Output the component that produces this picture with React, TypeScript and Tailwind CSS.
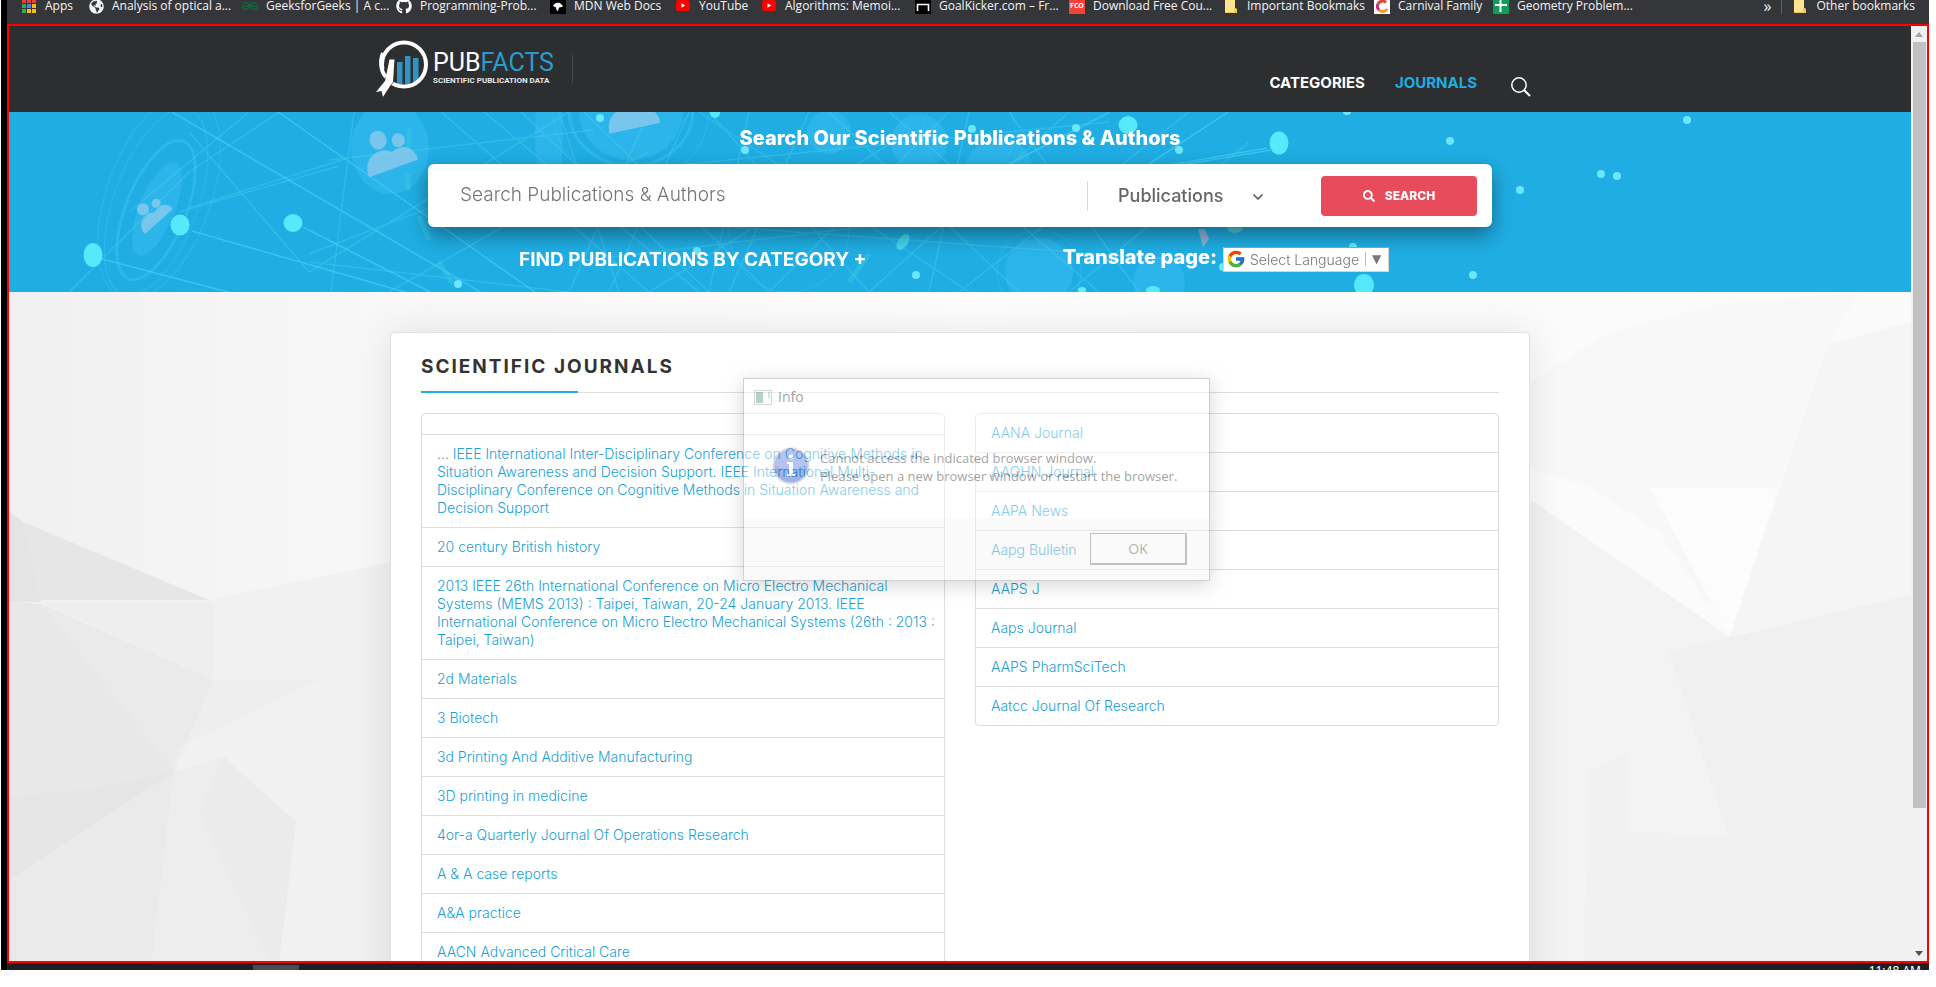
import React from "react";
import { FaGithub, FaSearch, FaGlobeAmericas } from "react-icons/fa";
import { FcGoogle } from "react-icons/fc";
import { SiGeeksforgeeks } from "react-icons/si";
import { ChevronDown } from "lucide-react";

const leftJournals = [
  "",
  "... IEEE International Inter-Disciplinary Conference on Cognitive Methods in\nSituation Awareness and Decision Support. IEEE International Multi-\nDisciplinary Conference on Cognitive Methods in Situation Awareness and\nDecision Support",
  "20 century British history",
  "2013 IEEE 26th International Conference on Micro Electro Mechanical\nSystems (MEMS 2013) : Taipei, Taiwan, 20-24 January 2013. IEEE\nInternational Conference on Micro Electro Mechanical Systems (26th : 2013 :\nTaipei, Taiwan)",
  "2d Materials",
  "3 Biotech",
  "3d Printing And Additive Manufacturing",
  "3D printing in medicine",
  "4or-a Quarterly Journal Of Operations Research",
  "A & A case reports",
  "A&A practice",
  "AACN Advanced Critical Care",
];

const rightJournals = [
  "AANA Journal",
  "AAOHN Journal",
  "AAPA News",
  "Aapg Bulletin",
  "AAPS J",
  "Aaps Journal",
  "AAPS PharmSciTech",
  "Aatcc Journal Of Research",
];

function AppsIcon() {
  const colors = ["#ea4335", "#ea4335", "#ea4335", "#34a853", "#4285f4", "#fbbc05", "#34a853", "#fbbc05", "#fbbc05"];
  return (
    <svg viewBox="0 0 16 16" className="size-4">
      {colors.map((c, i) => (
        <rect key={i} x={1 + (i % 3) * 5} y={1 + Math.floor(i / 3) * 5} width="4" height="4" fill={c} />
      ))}
    </svg>
  );
}

function FolderIcon() {
  return (
    <svg viewBox="0 0 16 16" className="size-4">
      <path d="M2 0h10v10l2 1v4H2z" fill="#ffe38f" />
      <path d="M2 14h9v1H2zM11 10l3 1v4h-3z" fill="#f2c94c" />
    </svg>
  );
}

function MdnIcon() {
  return (
    <svg viewBox="0 0 16 16" className="size-4">
      <rect width="16" height="16" fill="#000" />
      <path d="M3 8c1-3 4-4 7-3l3 3-1 1-3 .5L8 13 6.500 12 6 9.500z" fill="#fff" />
    </svg>
  );
}

function GoalIcon() {
  return (
    <svg viewBox="0 0 16 16" className="size-4">
      <rect width="16" height="16" fill="#000" />
      <path d="M2.500 13V6.500h11V13" fill="none" stroke="#fff" strokeWidth="1.600" />
    </svg>
  );
}

function CarnivalIcon() {
  return (
    <svg viewBox="0 0 16 16" className="size-4">
      <rect width="16" height="16" fill="#fff" />
      <path d="M12 4.500A5 5 0 0 0 4 6" fill="none" stroke="#e6452e" strokeWidth="3" />
      <path d="M4 6a5 5 0 0 0 1 6" fill="none" stroke="#c2308a" strokeWidth="3" />
      <path d="M5 12a5 5 0 0 0 8-1" fill="none" stroke="#f59a23" strokeWidth="3" />
    </svg>
  );
}

function SheetIcon() {
  return (
    <svg viewBox="0 0 16 16" className="size-4">
      <rect width="16" height="16" rx="1" fill="#0f9d58" />
      <path d="M7.500 2v12M2 7h12" stroke="#fff" strokeWidth="2" />
    </svg>
  );
}

function YouTubeIcon() {
  return (
    <svg viewBox="0 0 16 16" className="size-4">
      <rect x="1" y="2" width="14" height="11" rx="2.500" fill="#f00" />
      <path d="M6.500 5.200v4.600L10.300 7.500z" fill="#fff" />
    </svg>
  );
}

const bookmarks = [
  { label: "Apps", icon: <AppsIcon />, width: "w-[67px]" },
  { label: "Analysis of optical a...", icon: <FaGlobeAmericas className="size-[15px] text-gray-100" />, width: "w-[154px]" },
  { label: "GeeksforGeeks | A c...", icon: <SiGeeksforgeeks className="size-4 text-[#0f6b3c]" />, width: "w-[154px]" },
  { label: "Programming-Prob...", icon: <FaGithub className="size-4 text-white" />, width: "w-[154px]" },
  { label: "MDN Web Docs", icon: <MdnIcon />, width: "w-[125px]" },
  { label: "YouTube", icon: <YouTubeIcon />, width: "w-[86px]" },
  { label: "Algorithms: Memoi...", icon: <YouTubeIcon />, width: "w-[154px]" },
  { label: "GoalKicker.com – Fr...", icon: <GoalIcon />, width: "w-[154px]" },
  {
    label: "Download Free Cou...",
    icon: <span className="flex size-4 items-center justify-center bg-[#f44336] text-[7px] font-bold text-white">FCO</span>,
    width: "w-[154px]",
  },
  { label: "Important Bookmaks", icon: <FolderIcon />, width: "w-[151px]" },
  { label: "Carnival Family", icon: <CarnivalIcon />, width: "w-[119px]" },
  { label: "Geometry Problem...", icon: <SheetIcon />, width: "w-[154px]" },
];

function BookmarksBar() {
  return (
    <nav aria-label="Bookmarks" className="flex h-6 shrink-0 flex-col justify-end overflow-hidden bg-[#35363a]">
      <div className="flex h-9 shrink-0 items-center pr-3.5 pl-[14px] font-['Open_Sans',sans-serif] text-[12px] leading-4 text-gray-100">
        {bookmarks.map((b, i) => (
          <a key={i} href="#" className={`flex shrink-0 items-center gap-2 whitespace-nowrap ${b.width}`}>
            <span className="flex size-4 shrink-0 items-center justify-center">{b.icon}</span>
            {b.label}
          </a>
        ))}
        <div className="ml-auto flex items-center">
          <button type="button" aria-label="More bookmarks" className="pr-2.5 text-[16px]">
            »
          </button>
          <span className="h-4 w-px bg-[#5f6368]" />
          <a href="#" className="flex items-center gap-2 pl-2.5 whitespace-nowrap">
            <FolderIcon />
            Other bookmarks
          </a>
        </div>
      </div>
    </nav>
  );
}

function Logo() {
  return (
    <a href="#" aria-label="PubFacts" className="flex items-center">
      <svg viewBox="0 0 54 60" className="h-[60px] w-[54px]">
        <rect x="22" y="23" width="5.500" height="22" fill="#2f93c4" />
        <rect x="30" y="17" width="5.500" height="28" fill="#2f93c4" />
        <rect x="38" y="19" width="5.500" height="25" fill="#2f93c4" />
        <ellipse cx="29" cy="25.500" rx="22" ry="22" fill="none" stroke="#fff" strokeWidth="4" />
        <path d="M4 38 16 20l4 1-1 22-7 7-4 8-1.500-6L1 52l7-8 1-2z" fill="#2d2e30" />
        <path d="M14.500 20.500h5L18 43l-3 4-7 11-1.500-6L1 53l9-11z" fill="#fff" />
        <path d="M8 14C4 24 7 34 11 38" fill="none" stroke="#fff" strokeWidth="4" />
      </svg>
      <span className="flex flex-col pb-1 pl-1">
        <span className="font-['Roboto',sans-serif] text-[25px] leading-7 text-white">
          PUB<span className="text-[#2a9ccc]">FACTS</span>
        </span>
        <span className="font-['Roboto',sans-serif] text-[8px] leading-2 font-bold whitespace-nowrap text-gray-200">
          SCIENTIFIC PUBLICATION DATA
        </span>
      </span>
      <span className="ml-[18px] h-7 w-px bg-[#47484a]" />
    </a>
  );
}

function SiteHeader() {
  return (
    <header className="h-[86px] shrink-0 bg-[#2d2e30]">
      <div className="mx-auto flex h-full max-w-[1170px] items-center justify-between">
        <Logo />
        <div className="flex items-center pt-8 pr-3.5 text-[15px] leading-5 font-bold">
          <a href="#" className="pb-1 text-white">CATEGORIES</a>
          <a href="#" className="pb-1 pl-[30px] text-[#1fade3]">JOURNALS</a>
          <button type="button" aria-label="Search" className="ml-[34px]">
            <svg viewBox="0 0 20 20" className="mt-1 size-5" fill="none" stroke="#fff" strokeWidth="1.500">
              <circle cx="8" cy="8" r="7.200" />
              <path d="m13 13 6 6" strokeWidth="2.200" />
            </svg>
          </button>
        </div>
      </div>
    </header>
  );
}

type Dot = [number, number, number, number];

const brightDots: Dot[] = [
  [84, 143, 9.5, 12], [171, 113, 9.5, 10.5], [284, 111, 9.5, 9], [1119, 13, 9.5, 9], [1270, 31, 9.5, 11.5],
  [1355, 173, 10, 11], [706, 1, 5, 5], [1144, 178, 7, 4],
];
const smallDots: Dot[] = [
  [449, 172, 4, 4], [591, 6, 4, 4], [736, 38, 4, 4], [688, 139, 4, 4], [907, 163, 4, 4], [963, 17, 4, 4], [1067, 16, 4, 4],
  [1170, 38, 4, 4], [1073, 178, 4, 3], [1338, 0, 4, 3], [1678, 8, 4, 4], [1441, 29, 4, 4], [1592, 62, 4, 4],
  [1608, 64, 4, 4], [1511, 78, 4, 4], [1344, 135, 4, 4], [1464, 163, 4, 4], [1214, 155, 4, 4],
];
const strongLines = [
  "M163 0 424 152 500 197", "M269 0 526 180", "M93 147 219 180", "M183 119 396 180", "M294 115 421 180",
  "M1121 60 1258 36", "M1178 52 1262 38", "M1101 0 1000 52", "M1355 178 1180 230", "M1140 52 1219 0",
];
const faintLines = [
  "M180 96 345 44", "M170 100 330 54", "M320 48 585 18", "M345 0 322 180", "M180 20 300 160 560 0",
  "M300 142 420 96 560 60", "M300 150 560 180", "M432 0 640 180", "M475 0 690 180", "M512 0 700 180",
  "M550 0 610 180", "M575 0 760 180", "M60 180 180 60 300 -20", "M640 0 560 180", "M680 0 600 180", "M700 0 860 180",
  "M720 180 800 0", "M760 180 940 0", "M640 180 900 20", "M690 0 960 180", "M820 0 1010 180", "M860 180 1060 0",
  "M880 0 1090 180", "M950 180 1180 0", "M1000 0 1130 180", "M920 180 960 0", "M1060 180 1240 30", "M600 60 1100 10",
  "M380 180 520 100 640 40", "M560 150 980 100", "M650 110 1200 150", "M120 100 240 0", "M740 0 700 180",
];

function Person({ transform }: { transform: string }) {
  return (
    <g transform={transform} fill="#8ccbec" opacity="0.8">
      <ellipse cx="-3" cy="-18" rx="8.500" ry="9.500" />
      <ellipse cx="16" cy="-11" rx="6.500" ry="7" />
      <path d="M-24 14c0-14 8-21 18-21 6 0 9 2 12 5 11-4 20 0 22 12v4z" />
    </g>
  );
}

function HeroArt() {
  return (
    <svg
      aria-hidden="true"
      viewBox="0 0 1902 180"
      preserveAspectRatio="xMidYMid slice"
      className="absolute inset-0 h-full w-full"
      fill="none"
    >
      <g fill="#3fc0f5" opacity="0.4">
        <ellipse cx="381" cy="36" rx="39" ry="46" />
        <ellipse cx="622" cy="0" rx="52" ry="48" />
        <ellipse cx="148" cy="97" rx="18" ry="50" transform="rotate(22 148 97)" />
        <circle cx="820" cy="20" r="22" />
        <circle cx="910" cy="30" r="28" />
        <circle cx="990" cy="60" r="34" />
        <circle cx="1030" cy="160" r="34" />
        <circle cx="1150" cy="170" r="26" />
        <ellipse cx="540" cy="20" rx="14" ry="60" />
      </g>
      <g stroke="#48c6f3" opacity="0.4">
        <ellipse cx="147" cy="98" rx="30" ry="74" transform="rotate(22 147 98)" strokeWidth="3" />
        <ellipse cx="147" cy="90" rx="42" ry="98" transform="rotate(20 147 90)" />
        <ellipse cx="150" cy="84" rx="52" ry="108" transform="rotate(20 150 84)" />
        <ellipse cx="622" cy="-2" rx="62" ry="56" strokeWidth="3" />
        <ellipse cx="622" cy="-2" rx="78" ry="74" />
        <circle cx="1030" cy="160" r="42" />
        <circle cx="780" cy="120" r="60" />
        <circle cx="960" cy="20" r="46" />
      </g>
      <g stroke="#4fd0f2" opacity="0.38" strokeWidth="1.500">
        {faintLines.map((d) => <path key={d} d={d} />)}
      </g>
      <g stroke="#45cdf7" opacity="0.7" strokeWidth="1.500">
        {strongLines.map((d) => <path key={d} d={d} />)}
      </g>
      <g stroke="#3fd0e0" opacity="0.4" strokeWidth="5">
        <path d="M400 16v20M399 62v16M410 104l10 24M430 150l14 22M840 170l20-28" />
      </g>
      <Person transform="translate(378 44) rotate(-20)" />
      <Person transform="translate(621 3) rotate(-12)" />
      <Person transform="translate(143 104) rotate(-42) scale(0.720 0.620)" />
      <path d="m1189 117 5 18 6-8-4-10z" fill="#8ab4d8" />
      <ellipse cx="894" cy="130" rx="5" ry="9" transform="rotate(35 894 130)" fill="#4fdcf0" opacity="0.8" />
      <ellipse cx="1226" cy="116" rx="8" ry="5" fill="#4ccbd8" />
      <g fill="#55e9fb">
        {brightDots.map(([x, y, rx, ry]) => <ellipse key={`${x}-${y}`} cx={x} cy={y} rx={rx} ry={ry} />)}
      </g>
      <g fill="#6be6fb">
        {smallDots.map(([x, y, rx, ry]) => <ellipse key={`${x}-${y}`} cx={x} cy={y} rx={rx} ry={ry} />)}
      </g>
    </svg>
  );
}

function Hero() {
  return (
    <section className="relative h-[180px] shrink-0 overflow-hidden bg-[#1fade3]">
      <HeroArt />
      <div className="relative mx-auto flex max-w-[1064px] flex-col">
        <h2 className="pt-3 text-center text-[20px] leading-7 font-extrabold text-white">
          Search Our Scientific Publications &amp; Authors
        </h2>
        <form
          className="mt-3 flex h-[63px] items-center rounded-md bg-white pr-[15px] pl-8 shadow-[0_8px_20px_rgba(0,0,0,0.4)]"
          onSubmit={(e) => e.preventDefault()}
        >
          <input
            type="text"
            aria-label="Search Publications and Authors"
            placeholder="Search Publications &amp; Authors"
            className="min-w-0 flex-1 text-[19px] font-light text-gray-700 outline-none placeholder:text-[#757575]"
          />
          <div className="relative flex h-[30px] w-[234px] items-center border-l border-[#d9d9d9] pl-[30px]">
            <select
              aria-label="Search type"
              className="w-[160px] appearance-none bg-transparent text-[18px] font-medium text-[#666] outline-none"
            >
              <option>Publications</option>
            </select>
            <ChevronDown className="pointer-events-none absolute top-2 left-[162px] size-4 text-[#555]" strokeWidth={2.5} />
          </div>
          <button
            type="submit"
            className="flex h-10 w-[156px] items-center justify-center gap-2.5 rounded bg-[#e84b5b] text-[12px] font-extrabold text-white"
          >
            <FaSearch className="size-3" />
            SEARCH
          </button>
        </form>
        <div className="flex items-center justify-between pt-[18px] pr-[103px] pl-[91px] text-white">
          <a href="#" className="pt-0.5 text-[19px] leading-6 font-bold">FIND PUBLICATIONS BY CATEGORY +</a>
          <div className="flex items-center">
            <label htmlFor="language" className="pb-1 text-[20px] leading-6 font-extrabold">Translate page:</label>
            <div className="ml-1.5 flex h-[25px] w-[166px] items-center border border-[#d5d5d5] border-t-[#9b9b9b] bg-white pl-0.5 text-[#76787b]">
              <FcGoogle className="size-5" />
              <select id="language" className="ml-1 w-[115px] appearance-none text-[14px] font-light outline-none">
                <option>Select Language</option>
              </select>
              <span className="h-3.5 w-px bg-[#bbb]" />
              <span className="pl-1.5 font-['DejaVu_Sans',sans-serif] text-[12px] leading-4">▼</span>
            </div>
          </div>
        </div>
      </div>
    </section>
  );
}

function PolygonBackdrop() {
  return (
    <svg
      aria-hidden="true"
      viewBox="0 0 1902 669"
      preserveAspectRatio="xMidYMid slice"
      className="absolute inset-0 h-full w-full"
    >
      <defs>
        <linearGradient id="sky" x1="0" y1="0" x2="1" y2="0">
          <stop offset="0" stopColor="#f0f0f0" />
          <stop offset="0.200" stopColor="#f8f8f8" />
          <stop offset="0.500" stopColor="#fdfdfd" />
          <stop offset="1" stopColor="#fafafa" />
        </linearGradient>
      </defs>
      <rect width="1902" height="669" fill="url(#sky)" />
      <path d="M0 220 14 230 200 308 382 270V669H0z" fill="#f1f1f1" />
      <path d="M0 220 14 230 200 308H0z" fill="#e6e6e6" />
      <path d="M14 230 32 310H0V220z" fill="#e4e4e4" />
      <path d="M32 310H204V388z" fill="#eeeeee" />
      <path d="M32 312 204 388 165 480 0 588V310z" fill="#e8e8e8" />
      <path d="M32 312 204 388 165 480z" fill="#eaeaea" />
      <path d="M0 505 90 495 165 480 0 588z" fill="#e6e6e6" />
      <path d="M165 480 0 588V669H143z" fill="#eaeaea" />
      <path d="M165 480 204 388H310L170 455z" fill="#eeeeee" />
      <path d="M165 480 143 669H270L287 530 215 465z" fill="#ededed" />
      <path d="M190 520 260 669H270L287 530 215 465z" fill="#ebebeb" />
      <path d="M1522 90 1600 40 1710 12 1850 0 1819 52 1778 170 1721 325 1522 190z" fill="#f8f8f8" />
      <path d="M1641 196H1768L1721 345z" fill="#fcfcfc" />
      <path d="M1522 176 1580 195 1650 240 1721 345 1522 208z" fill="#fbfbfb" />
      <path d="M1819 52 1902 30V305L1721 344z" fill="#f5f5f5" />
      <path d="M1522 208 1721 345 1902 303V669H1522z" fill="#f3f3f3" />
      <path d="M1721 345 1902 303V669H1760L1660 360z" fill="#f0f0f0" />
      <path d="M1575 669 1580 480 1620 460V540L1750 545 1902 540V669z" fill="#f1f1f1" />
    </svg>
  );
}

function JournalList({ items }: { items: string[] }) {
  return (
    <ul className="rounded border border-[#ddd]">
      {items.map((item) => (
        <li key={item} className="border-t border-[#ddd] px-[15px] py-2.5 text-[14px] leading-[18px] font-light first:border-t-0">
          {item && <a href="#" className="block whitespace-pre text-[#1a9fd8]">{item}</a>}
        </li>
      ))}
    </ul>
  );
}

function InfoDialog() {
  return (
    <div
      role="dialog"
      aria-label="Info"
      className="absolute top-[86px] left-1/2 ml-[-217px] flex h-[203px] w-[467px] flex-col border border-[#999] bg-white font-['Open_Sans',sans-serif] opacity-45 shadow-[0_4px_18px_rgba(0,0,0,0.35)]"
    >
      <div className="flex items-center gap-1.5 pt-2 pl-2.5 text-[14px] leading-5 text-[#333]">
        <svg viewBox="0 0 18 15" className="h-[15px] w-[18px]">
          <rect x="0.500" y="0.500" width="17" height="14" fill="#f5f9fa" stroke="#aaa" />
          <rect x="2" y="2" width="7" height="11" fill="#5c9c92" />
          <rect x="14" y="2" width="2" height="6" fill="#9cc" />
        </svg>
        Info
      </div>
      <div className="flex flex-1 items-start pt-10 pl-7">
        <svg viewBox="0 0 38 38" className="size-[38px]">
          <circle cx="19" cy="19" r="18.500" fill="#b5b5b5" />
          <circle cx="19" cy="19" r="16.500" fill="#3159cf" />
          <path d="M3 19a16 16 0 0 1 32 0c-8 5-22 5-32 0z" fill="#5b7be0" />
          <circle cx="19" cy="10" r="2.600" fill="#fff" />
          <path d="M15 15h6v12h2v2h-8v-2h2V17h-2z" fill="#fff" />
        </svg>
        <p className="pt-0.5 pl-2.5 text-[13px] leading-[18px] whitespace-nowrap text-[#333]">
          Cannot access the indicated browser window.
          <br />
          Please open a new browser window or restart the browser.
        </p>
      </div>
      <div className="flex h-[62px] shrink-0 items-center justify-end bg-[#f4f4f4] pr-[22px]">
        <button
          type="button"
          className="h-8 w-[97px] border border-r-2 border-b-2 border-[#777] bg-[#f6f6f6] text-[14px] leading-5 text-[#555]"
        >
          OK
        </button>
      </div>
    </div>
  );
}

function JournalsSection() {
  return (
    <main className="relative min-h-0 flex-1 overflow-hidden">
      <PolygonBackdrop />
      <div className="relative mx-auto mt-10 max-w-[1140px] rounded border border-[#dde3e6] bg-white px-[30px] pt-5 pb-[30px] shadow-[0_0_40px_rgba(0,0,0,0.1)]">
        <h1 className="border-b border-[#ddd] text-[19px] font-bold tracking-[2px] text-[#333]">
          <span className="block pb-2.5 leading-7">SCIENTIFIC JOURNALS</span>
          <span className="-mb-px block h-0.5 w-[157px] bg-[#1fade3]" />
        </h1>
        <div className="grid grid-cols-2 items-start gap-[30px] pt-5">
          <JournalList items={leftJournals} />
          <JournalList items={rightJournals} />
        </div>
      </div>
      <InfoDialog />
    </main>
  );
}

function ScrollBar() {
  return (
    <div aria-hidden="true" className="flex w-4 shrink-0 flex-col items-center bg-[#f1f1f1]">
      <span className="flex h-4 items-center">
        <svg viewBox="0 0 8 5" className="h-[5px] w-2"><path d="M0 5h8L4 0z" fill="#a3a3a3" /></svg>
      </span>
      <span className="w-[13px] flex-[766] bg-[#c1c1c1]" />
      <span className="flex-[137]" />
      <span className="flex h-4 items-center">
        <svg viewBox="0 0 8 5" className="h-[5px] w-2"><path d="M0 0h8L4 5z" fill="#505050" /></svg>
      </span>
    </div>
  );
}

export default function App() {
  return (
    <div className="flex h-screen flex-col bg-white pr-[7px] pb-[17px] pl-px font-['Inter',sans-serif]">
      <div className="flex min-h-0 flex-1 bg-black pl-1.5">
        <div className="flex min-w-0 flex-1 flex-col">
          <BookmarksBar />
          <div className="flex min-h-0 flex-1 border-2 border-[#f00] bg-white">
            <div className="flex min-w-0 flex-1 flex-col">
              <SiteHeader />
              <Hero />
              <JournalsSection />
            </div>
            <ScrollBar />
          </div>
          <footer className="flex h-[7px] shrink-0 justify-between overflow-hidden bg-[#1e1f23] pr-2 pl-[246px]">
            <span className="mt-0.5 h-2 w-[46px] bg-[#4b4c4f]" />
            <time className="font-['Noto_Sans',sans-serif] text-[12px] leading-4 whitespace-nowrap text-white">11:48 AM</time>
          </footer>
        </div>
      </div>
    </div>
  );
}
